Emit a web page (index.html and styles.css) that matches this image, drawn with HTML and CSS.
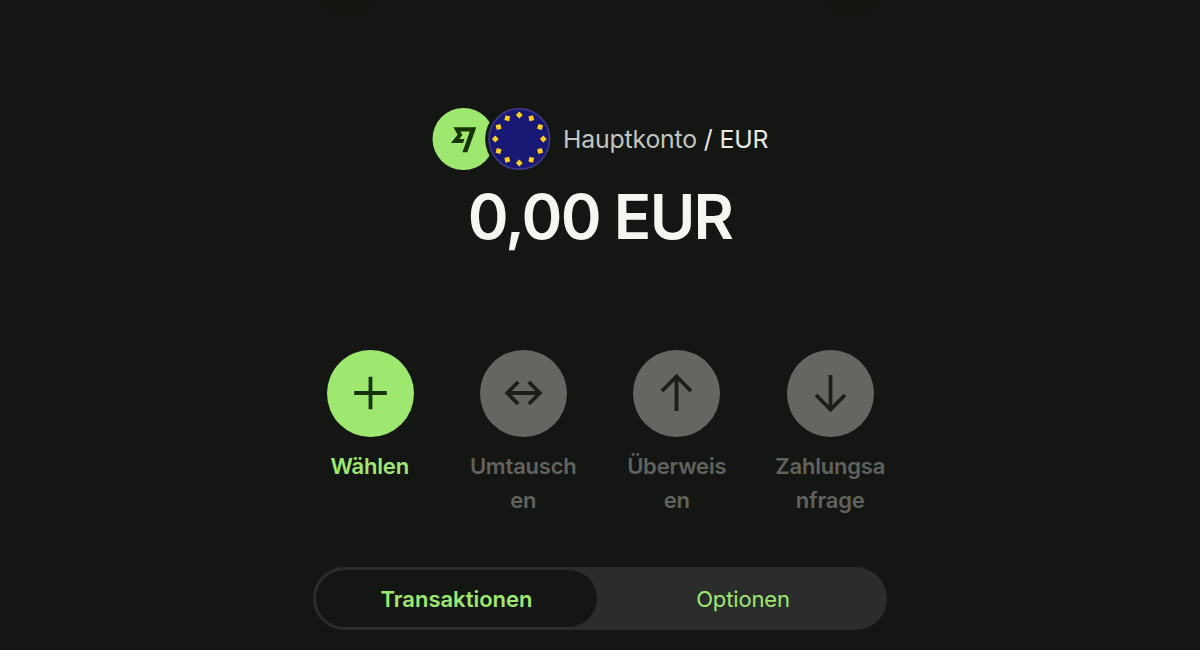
FILE: index.html
```html
<!DOCTYPE html>
<html lang="de">
<head>
<meta charset="utf-8">
<title>Hauptkonto</title>
<link rel="stylesheet" href="styles.css">
</head>
<body>
<main class="screen">
  <div class="shades"><span class="shade"></span><span class="shade"></span></div>
  <header class="account">
    <svg class="avatars" width="120" height="64" viewBox="0 0 120 64">
      <circle class="brand" cx="32.5" cy="32" r="31"/>
      <path class="brand-mark" transform="translate(19.9 20.3) scale(1.165 1.2)" d="M5.8 6.2L0 13H10.4L11.6 9.8H7.1L9.8 6.6V6.5L8.1 3.5H16.2L9.9 20.7H14.1L21.8 0H2.2Z"/>
      <circle class="gap" cx="88.3" cy="32" r="34.2"/>
      <circle class="flag" cx="88.3" cy="32" r="30.3"/>
      <g class="stars" id="stars"></g>
    </svg>
    <p class="name">Hauptkonto <span class="currency">/ EUR</span></p>
  </header>
  <h1 class="balance">0,00 EUR</h1>
  <nav class="actions">
    <button class="action primary">
      <svg class="disc" viewBox="0 0 87 87"><path d="M43.5 26.7V59.3M27.2 43H59.8"/></svg>
      <span class="label">Wählen</span>
    </button>
    <button class="action">
      <svg class="disc" viewBox="0 0 87 87"><path d="M27 43H60M38.2 32L27.2 43L38.2 54M48.8 32L59.8 43L48.8 54"/></svg>
      <span class="label">Umtausch<br>en</span>
    </button>
    <button class="action">
      <svg class="disc" viewBox="0 0 87 87"><path d="M43.5 61V26.5M29 41L43.5 26.5L58 41"/></svg>
      <span class="label">Überweis<br>en</span>
    </button>
    <button class="action">
      <svg class="disc" viewBox="0 0 87 87"><path d="M43.5 25V59.5M29 45L43.5 59.5L58 45"/></svg>
      <span class="label">Zahlungsa<br>nfrage</span>
    </button>
  </nav>
  <div class="tabs">
    <button class="tab selected">Transaktionen</button>
    <button class="tab">Optionen</button>
  </div>
</main>
<script src="stars.js"></script>
</body>
</html>
```
FILE: stars.js
```js
const group = document.getElementById("stars");
for (let i = 0; i < 12; i++) {
  const star = document.createElementNS("http://www.w3.org/2000/svg", "path");
  star.setAttribute("d", "M88.3 4.6L91.7 8L88.3 11.4L84.9 8Z");
  star.setAttribute("transform", `rotate(${i * 30} 88.3 32)`);
  group.append(star);
}
```
FILE: styles.css
```css
* { box-sizing: border-box; }
body {
  margin: 0;
  background: #141613;
  font-family: Inter, sans-serif;
}
.screen {
  width: 1200px;
  height: 650px;
  overflow: hidden;
  display: flex;
  flex-direction: column;
  align-items: center;
}
.shades {
  width: 574px;
  height: 15px;
  flex: none;
  display: flex;
  align-items: flex-end;
  justify-content: space-between;
}
.shade {
  width: 70px;
  height: 70px;
  border-radius: 50%;
  background: #141511;
}
.account {
  display: flex;
  align-items: center;
  width: 338px;
  height: 64px;
  margin-top: 92px;
}
.avatars { flex: none; }
.brand { fill: #9fe870; }
.brand-mark { fill: #163300; }
.gap { fill: #141613; }
.flag { fill: #191975; stroke: #413c8c; stroke-width: 1.5; }
.stars { fill: #ffd11a; }
.name {
  margin: 0 0 0 12px;
  white-space: nowrap;
  font-size: 24.8px;
  font-weight: 370;
  letter-spacing: -0.16px;
  color: #c3c5c0;
}
.currency { color: #e8eae4; }
.balance {
  margin: 8px 0 0;
  height: 76px;
  line-height: 76px;
  font-size: 62px;
  font-weight: 600;
  letter-spacing: -1.7px;
  color: #f4f6f0;
}
.actions {
  display: flex;
  width: 614px;
  margin: 95px 0 0;
}
button {
  padding: 0;
  border: 0;
  background: none;
  font-family: inherit;
}
.action {
  width: 153.5px;
  display: flex;
  flex-direction: column;
  align-items: center;
  color: #60625d;
}
.disc {
  width: 87px;
  height: 87px;
  border-radius: 50%;
  background: #646661;
  fill: none;
  stroke: #1c1e19;
  stroke-width: 3.8;
}
.label {
  margin-top: 12px;
  font-size: 22px;
  line-height: 34px;
  font-weight: 600;
  letter-spacing: -0.2px;
}
.primary { color: #9fe870; }
.primary .disc { margin-left: 1px; background: #9fe870; stroke: #163300; }
.tabs {
  display: flex;
  width: 574px;
  height: 63px;
  margin-top: 50px;
  padding: 3px;
  border-radius: 32px;
  background: #2b2d2c;
}
.tab {
  flex: 1;
  padding-left: 5px;
  border-radius: 29px;
  font-size: 22px;
  font-weight: 380;
  letter-spacing: -0.15px;
  color: #9fe870;
}
.selected {
  flex: 0 0 281px;
  padding-left: 0;
  background: #141613;
  font-weight: 600;
  letter-spacing: 0;
}
```
